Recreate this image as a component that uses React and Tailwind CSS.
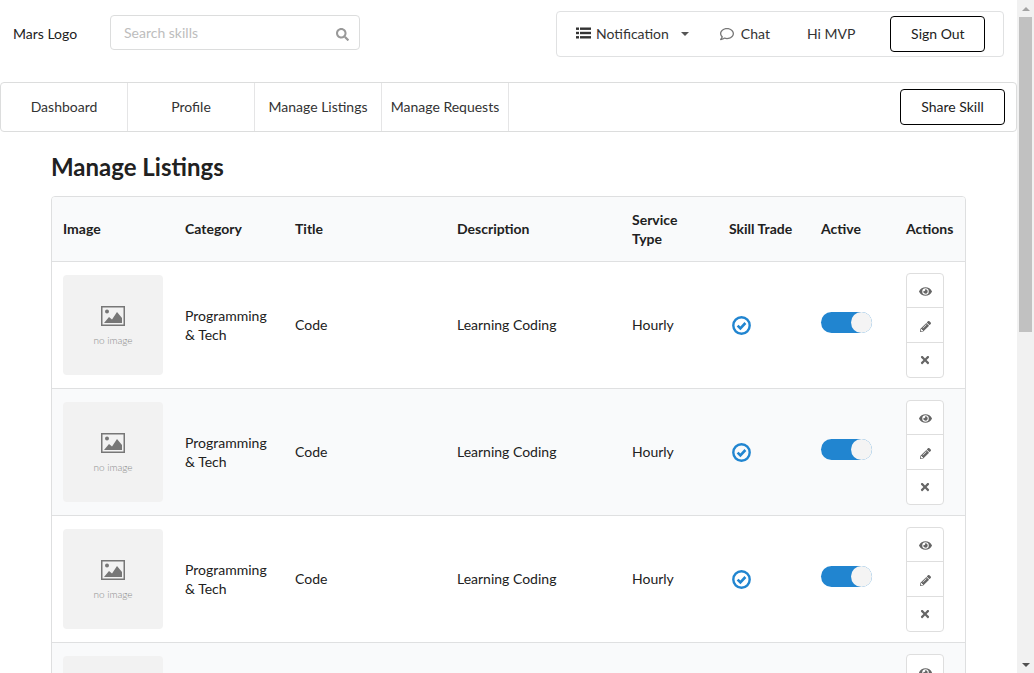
import { FaSearch, FaRegComment, FaEye, FaPencilAlt, FaTimes } from "react-icons/fa";

const rows = [0, 1, 2, 3];

function NoImage() {
    return (
        <div className="w-[100px] h-[100px] bg-[#f2f2f2] rounded-[4px] flex flex-col items-center pt-[31px]">
            <svg width="24" height="20" viewBox="0 0 24 20">
                <rect x="0.75" y="0.75" width="22.5" height="18.5" fill="#f2f2f2" stroke="#777" strokeWidth="1.5" />
                <circle cx="6" cy="5.5" r="2" fill="#777" />
                <path d="M3 17 L8 11 L11 13.5 L16 6 L21 12 V17 Z" fill="#777" />
            </svg>
            <span className="text-[10px] leading-none mt-[9px] text-[#8a8a8a] font-light">no image</span>
        </div>
    );
}

function CheckCircle() {
    return (
        <svg className="ml-[3px] mt-[2px] block" width="19" height="19" viewBox="0 0 19 19" fill="none">
            <circle cx="9.5" cy="9.5" r="8.2" stroke="#2185d0" strokeWidth="2.4" />
            <path d="M5.6 9.6 L8.4 12.3 L13.4 7" stroke="#2185d0" strokeWidth="2.6" />
        </svg>
    );
}

function ListIcon() {
    return (
        <svg className="ml-[19px] mb-[2px]" width="15" height="12" viewBox="0 0 15 12" fill="#333">
            <rect x="0" y="0.5" width="3" height="2.4" />
            <rect x="4" y="0.5" width="11" height="2.4" />
            <rect x="0" y="4.8" width="3" height="2.4" />
            <rect x="4" y="4.8" width="11" height="2.4" />
            <rect x="0" y="9.1" width="3" height="2.4" />
            <rect x="4" y="9.1" width="11" height="2.4" />
        </svg>
    );
}

function ListingRow({ striped }) {
    return (
        <tr className={`border-t border-[#dfe0e1] ${striped ? "bg-[#f9fafb]" : "bg-white"}`}>
            <td className="pl-[11px] py-[13px] align-middle"><NoImage /></td>
            <td className="pl-[11px] pr-[8px] align-middle">Programming &amp; Tech</td>
            <td className="pl-[11px] align-middle">Code</td>
            <td className="pl-[11px] align-middle">Learning Coding</td>
            <td className="pl-[11px] align-middle">Hourly</td>
            <td className="pl-[11px] align-middle"><CheckCircle /></td>
            <td className="pl-[11px] align-middle">
                <div className="relative w-[51px] h-[21px] mb-[4px] rounded-full bg-[#2185d0]">
                    <div className="absolute right-0 top-0 w-[21px] h-[21px] rounded-full bg-[#f4f4f4]" />
                </div>
            </td>
            <td className="pl-[11px] align-middle">
                <div className="mt-[1px] w-[38px] h-[105px] flex flex-col bg-white border border-[#dedede] rounded-[4px] text-[#666] divide-y divide-[#dedede]">
                    <div className="flex-1 flex items-center justify-center"><FaEye className="mt-[2px] text-[13px]" /></div>
                    <div className="flex-1 flex items-center justify-center"><FaPencilAlt className="mt-[2px] text-[11px]" /></div>
                    <div className="flex-1 flex items-center justify-center"><FaTimes className="text-[12px]" /></div>
                </div>
            </td>
        </tr>
    );
}

export default function App() {
    return (
        <div className="flex h-screen overflow-hidden bg-white text-[14px] leading-[19px] text-[#212121] font-['Lato','Open_Sans',sans-serif]">
            <div className="flex-1 min-w-0">
                {/* top bar */}
                <header className="flex items-start h-[82px]">
                    <span className="ml-[13px] mt-[24px] w-[97px]">Mars Logo</span>
                    <div className="mt-[15px] w-[250px] h-[35px] flex items-center justify-between pl-[13px] pr-[10px] border border-[#dcdddd] rounded-[4px]">
                        <span className="text-[#bdbdbd] -mt-[1px]">Search skills</span>
                        <FaSearch className="text-[13px] text-[#999] mt-[3px]" />
                    </div>
                    <nav className="ml-auto mt-[11px] mr-[13px] w-[448px] h-[46px] flex items-center border border-[#e0e1e2] rounded-[4px] text-[#333]">
                        <ListIcon />
                        <span className="ml-[5px] mb-[2px]">Notification</span>
                        <span className="ml-[12px] mb-[1px] w-0 h-0 border-x-[4px] border-x-transparent border-t-[4px] border-t-[#555]" />
                        <FaRegComment className="ml-[31px] text-[14px] text-[#777]" />
                        <span className="ml-[7px] mb-[2px]">Chat</span>
                        <span className="ml-[37px] mb-[2px]">Hi MVP</span>
                        <button className="ml-[35px] w-[95px] h-[36px] pb-[2px] border border-black rounded-[4px] bg-white text-[#212121]">Sign Out</button>
                    </nav>
                </header>

                {/* secondary menu */}
                <div className="h-[50px] flex items-stretch border border-[#dcdddd] rounded-[4px] text-[#333]">
                    <div className="w-[127px] pb-[2px] flex items-center justify-center border-r border-[#e5e5e6]">Dashboard</div>
                    <div className="w-[127px] pb-[2px] flex items-center justify-center border-r border-[#e5e5e6]">Profile</div>
                    <div className="w-[127px] pb-[2px] flex items-center justify-center border-r border-[#e5e5e6]">Manage Listings</div>
                    <div className="w-[127px] pb-[2px] flex items-center justify-center border-r border-[#e5e5e6]">Manage Requests</div>
                    <button className="ml-auto mr-[11px] my-[6px] w-[105px] pb-[2px] border border-black rounded-[4px] bg-white text-[#212121]">Share Skill</button>
                </div>

                <main className="pl-[51px] w-[966px]">
                    <h1 className="mt-[20px] mb-[14px] text-[24px] leading-[30px] font-bold text-[#212121]">Manage Listings</h1>
                    <div className="border border-[#dedfe0] rounded-[4px] overflow-hidden">
                        <table className="w-full table-fixed border-collapse text-left">
                            <colgroup>
                                <col className="w-[122px]" />
                                <col className="w-[110px]" />
                                <col className="w-[162px]" />
                                <col className="w-[175px]" />
                                <col className="w-[97px]" />
                                <col className="w-[92px]" />
                                <col className="w-[85px]" />
                                <col className="w-[70px]" />
                            </colgroup>
                            <thead className="bg-[#f9fafb] font-bold">
                                <tr className="h-[64px]">
                                    <th className="pl-[11px]">Image</th>
                                    <th className="pl-[11px]">Category</th>
                                    <th className="pl-[11px]">Title</th>
                                    <th className="pl-[11px]">Description</th>
                                    <th className="pl-[11px] pr-[20px]">Service Type</th>
                                    <th className="pl-[11px]">Skill Trade</th>
                                    <th className="pl-[11px]">Active</th>
                                    <th className="pl-[11px]">Actions</th>
                                </tr>
                            </thead>
                            <tbody>
                                {rows.map((r) => (
                                    <ListingRow key={r} striped={r % 2 === 1} />
                                ))}
                            </tbody>
                        </table>
                    </div>
                </main>
            </div>

            {/* scrollbar */}
            <div className="w-[17px] shrink-0 flex flex-col items-center bg-[#f1f1f1]">
                <div className="h-[17px] flex items-center justify-center">
                    <span className="w-0 h-0 border-x-[4px] border-x-transparent border-b-[4px] border-b-[#a3a3a3]" />
                </div>
                <div className="w-[13px] h-[315px] bg-[#c1c1c1]" />
                <div className="mt-auto h-[17px] flex items-center justify-center">
                    <span className="w-0 h-0 border-x-[4px] border-x-transparent border-t-[4px] border-t-[#505050]" />
                </div>
            </div>
        </div>
    );
}
